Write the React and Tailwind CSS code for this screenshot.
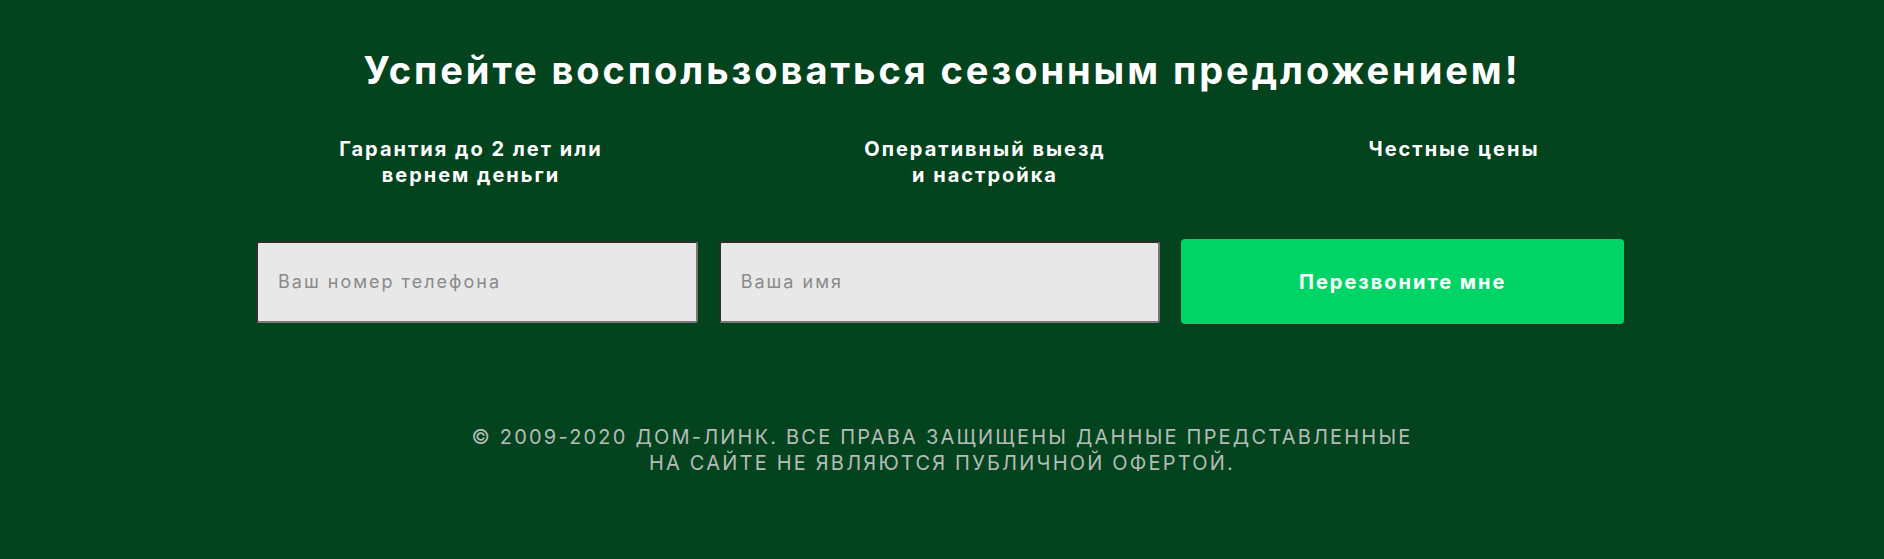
export default function App() {
  return (
    <div className="min-h-[559px] w-full bg-[#03441f] flex flex-col items-center font-['Inter',sans-serif]">
      <h1 className="mt-[47px] text-white text-[38px] leading-[46px] font-bold tracking-[2.95px] text-center">
        Успейте воспользоваться сезонным предложением!
      </h1>
      <div className="mt-[43px] flex w-[1368px] -ml-[4px] text-white text-[20px] leading-[26px] font-bold tracking-[2px] text-center">
        <div className="w-[430px]">Гарантия до 2 лет или<br />вернем деньги</div>
        <div className="w-[598px]">Оперативный выезд<br />и настройка</div>
        <div className="w-[340px]">Честные цены</div>
      </div>
      <div className="mt-[51px] flex w-[1368px] -ml-[4px] items-center gap-[21px] h-[85px]">
        <input
          type="text"
          placeholder="Ваш номер телефона"
          className="w-[442px] h-[82px] bg-[#e8e8e8] rounded-[3px] border-2 border-t-[#2e2e2e] border-l-[#2e2e2e] border-r-[#777] border-b-[#777] pl-[20px] text-[18px] tracking-[2px] text-[#555] placeholder:text-[#8a8a8a] outline-none"
        />
        <input
          type="text"
          placeholder="Ваша имя"
          className="w-[442px] h-[82px] bg-[#e8e8e8] rounded-[3px] border-2 border-t-[#2e2e2e] border-l-[#2e2e2e] border-r-[#777] border-b-[#777] pl-[20px] text-[18px] tracking-[2px] text-[#555] placeholder:text-[#8a8a8a] outline-none"
        />
        <button className="w-[443px] h-[85px] bg-[#00d466] rounded-[4px] text-white text-[20px] font-bold tracking-[2px]">
          Перезвоните мне
        </button>
      </div>
      <div className="mt-[100px] text-[#b6bcb7] text-[20px] leading-[26px] tracking-[2.2px] text-center uppercase">
        © 2009-2020 ДОМ-ЛИНК. ВСЕ ПРАВА ЗАЩИЩЕНЫ ДАННЫЕ ПРЕДСТАВЛЕННЫЕ<br />
        НА САЙТЕ НЕ ЯВЛЯЮТСЯ ПУБЛИЧНОЙ ОФЕРТОЙ.
      </div>
    </div>
  );
}
